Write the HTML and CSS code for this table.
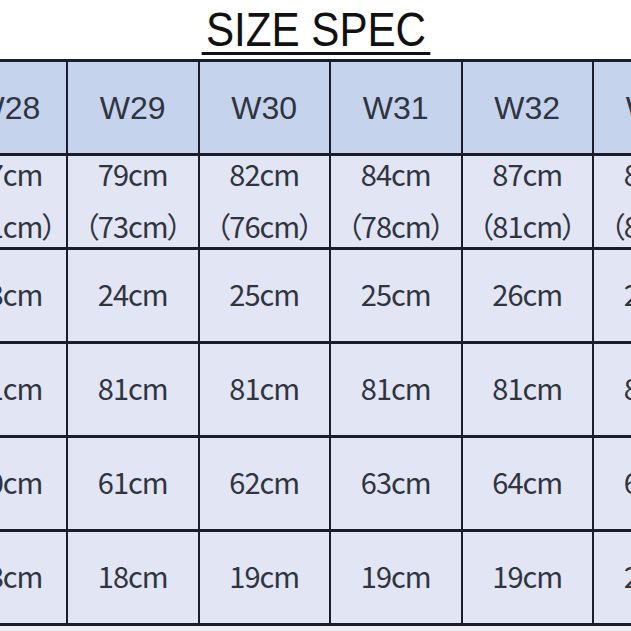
FILE: index.html
```html
<!DOCTYPE html>
<html>
<head>
<meta charset="utf-8">
<link rel="stylesheet" href="styles.css">
</head>
<body>
<div class="page">
  <div class="title-bar"><h1 class="title">SIZE SPEC</h1></div>
  <div class="table-wrap">
    <div class="grid">
      <div class="cell head">W28</div>
      <div class="cell head">W29</div>
      <div class="cell head">W30</div>
      <div class="cell head">W31</div>
      <div class="cell head">W32</div>
      <div class="cell head">W33</div>

      <div class="cell two"><span>77cm</span><span>（71cm）</span></div>
      <div class="cell two"><span>79cm</span><span>（73cm）</span></div>
      <div class="cell two"><span>82cm</span><span>（76cm）</span></div>
      <div class="cell two"><span>84cm</span><span>（78cm）</span></div>
      <div class="cell two"><span>87cm</span><span>（81cm）</span></div>
      <div class="cell two"><span>89cm</span><span>（83cm）</span></div>

      <div class="cell">23cm</div>
      <div class="cell">24cm</div>
      <div class="cell">25cm</div>
      <div class="cell">25cm</div>
      <div class="cell">26cm</div>
      <div class="cell">26cm</div>

      <div class="cell">81cm</div>
      <div class="cell">81cm</div>
      <div class="cell">81cm</div>
      <div class="cell">81cm</div>
      <div class="cell">81cm</div>
      <div class="cell">81cm</div>

      <div class="cell">60cm</div>
      <div class="cell">61cm</div>
      <div class="cell">62cm</div>
      <div class="cell">63cm</div>
      <div class="cell">64cm</div>
      <div class="cell">65cm</div>

      <div class="cell">18cm</div>
      <div class="cell">18cm</div>
      <div class="cell">19cm</div>
      <div class="cell">19cm</div>
      <div class="cell">19cm</div>
      <div class="cell">20cm</div>
    </div>
  </div>
</div>
</body>
</html>
```

FILE: styles.css
```css
html, body {
  margin: 0;
  padding: 0;
  background: #ffffff;
}

.page {
  width: 631px;
  height: 631px;
  overflow: hidden;
  background: #efeff1;
}

.title-bar {
  height: 59px;
  background: #ffffff;
  display: flex;
  justify-content: center;
}

.title {
  margin: 0;
  padding: 5px 5px 0;
  height: 47px;
  font-family: "Liberation Sans", Arial, sans-serif;
  font-weight: normal;
  font-size: 49px;
  line-height: 49px;
  color: #111111;
  border-bottom: 3px solid #111111;
  transform: scaleX(0.86);
  transform-origin: center top;
  box-sizing: content-box;
}

.table-wrap {
  width: 631px;
  overflow: hidden;
}

.grid {
  display: grid;
  grid-template-columns: 117px repeat(5, 129.5px);
  grid-template-rows: repeat(6, 91px);
  gap: 3px 2px;
  padding: 3px 0;
  margin-left: -51px;
  width: max-content;
  background: #1c1d2a;
}

.cell {
  background: #e2e5f3;
  display: flex;
  align-items: center;
  justify-content: center;
  font-family: "Noto Sans CJK JP", "Liberation Sans", sans-serif;
  font-size: 29px;
  letter-spacing: -1px;
  color: #30343f;
  white-space: nowrap;
  padding-bottom: 5px;
  box-sizing: border-box;
}

.head {
  background: #c5d3ec;
  font-family: "Liberation Sans", Arial, sans-serif;
  font-size: 32px;
  letter-spacing: 0;
  padding-bottom: 0;
  padding-top: 1px;
}

.two {
  flex-direction: column;
  line-height: 52px;
  padding-bottom: 6px;
  font-feature-settings: "palt";
}
```
